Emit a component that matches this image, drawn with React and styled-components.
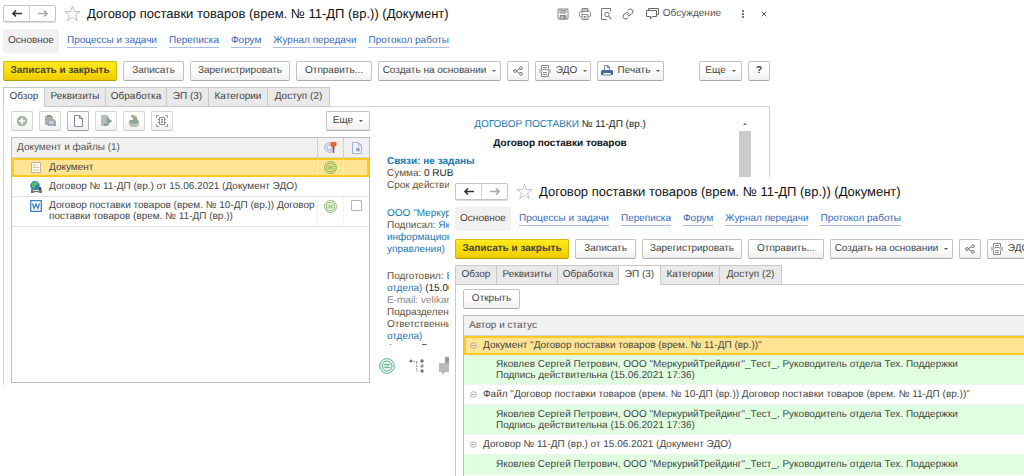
import React from "react";
import styled, { createGlobalStyle, css } from "styled-components";

const Global = createGlobalStyle`
  *, *::before, *::after { box-sizing: border-box; }
  body {
    margin: 0;
    background: #fff;
    color: #444;
    font: 10px/12px "Liberation Sans", Arial, sans-serif;
    text-rendering: geometricPrecision;
  }
  button, input { font: inherit; color: inherit; margin: 0; text-rendering: inherit; }
`;

/* ---------- desktop and windows ---------- */

const Desktop = styled.main`
  position: relative;
  min-height: 100vh;
  overflow: hidden;
`;

const Win = styled.section`
  overflow: hidden;
  background: #fff;
`;

const BackWindow = styled(Win)`
  width: 75.2%;
  padding: 5px 0 0 3px;
`;

const FrontWindow = styled(Win)`
  position: absolute;
  left: 449px;
  right: 0;
  top: 177px;
  bottom: 0;
  display: flex;
  flex-direction: column;
  padding: 6px 0 0 6px;
`;

const TitleBar = styled.header`
  display: flex;
  align-items: center;
  height: 17px;
`;

const NavPair = styled.div`
  display: flex;
  flex: none;
  width: 53px;
  height: 17px;
  border: 1px solid #c4c4c4;
  border-radius: 2px;
  box-shadow: 0 1px 0 #ddd;
`;

const NavButton = styled.button`
  flex: 1;
  display: flex;
  align-items: center;
  justify-content: center;
  padding: 0;
  border: 0;
  background: none;
  color: ${(p) => (p.disabled ? "#a8a8a8" : "#333")};
  & + & { border-left: 1px solid #d4d4d4; }
`;

const StarButton = styled.button`
  flex: none;
  display: flex;
  padding: 0;
  margin: 0 6px 0 8px;
  border: 0;
  background: none;
`;

const Title = styled.h1`
  margin: 0;
  flex: none;
  font-size: 13px;
  line-height: 17px;
  font-weight: 400;
  color: #111;
  white-space: nowrap;
`;

const HeaderTools = styled.div`
  display: flex;
  align-items: center;
  gap: 8px;
  margin-left: auto;
  padding-right: 3px;
  color: #555;
`;

const ToolLink = styled.button`
  display: flex;
  align-items: center;
  gap: 4px;
  padding: 0;
  border: 0;
  background: none;
  margin-left: ${(p) => p.$lead || 0}px;
`;

const Sections = styled.nav`
  display: flex;
  align-items: center;
  gap: 12px;
  height: 24px;
  margin-top: 7px;
  white-space: nowrap;
`;

const CurrentSection = styled.span`
  height: 24px;
  width: 56px;
  margin-right: -4px;
  line-height: 24px;
  text-align: center;
  background: #f1f1f1;
  border-radius: 2px;
`;

const SectionLink = styled.a`
  color: #3a6bb8;
  line-height: 12px;
  text-decoration: none;
  border-bottom: 1px solid #a9c0e2;
`;

const Commands = styled.div`
  display: flex;
  gap: 6px;
  margin-top: 8px;
  white-space: nowrap;
`;

const Spacer = styled.span`
  flex: 1;
`;

const Button = styled.button`
  flex: none;
  display: flex;
  align-items: center;
  justify-content: center;
  gap: 5px;
  width: ${(p) => p.$w}px;
  height: 20px;
  padding: 0;
  border: 1px solid #c2c2c2;
  border-bottom-color: #ababab;
  border-radius: 2px;
  background: linear-gradient(#fff 40%, #f0f0f0);
  white-space: nowrap;
  ${(p) =>
    p.$primary &&
    css`
      border-color: #d3b90b;
      border-bottom-color: #b59c00;
      background: linear-gradient(#ffe921, #f8da00 60%, #ecca00);
      font-weight: 700;
    `}
  ${(p) =>
    p.$strong &&
    css`
      border-color: #b4b4b4;
      border-bottom-color: #999;
    `}
  ${(p) =>
    p.$faint &&
    css`
      border-color: #d6d6d6;
      border-bottom-color: #c8c8c8;
    `}
`;

const Caret = styled.span`
  width: 0;
  height: 0;
  margin-left: 1px;
  border: 2px solid transparent;
  border-top-color: #555;
  border-bottom: 0;
`;

const Tabs = styled.div`
  display: flex;
  margin-top: 6px;
  position: relative;
  z-index: 1;
`;

const Tab = styled.button`
  flex: none;
  width: ${(p) => p.$w}px;
  height: 20px;
  padding: 0;
  border: 1px solid #c9c9c9;
  border-left-width: ${(p) => (p.$first ? 1 : 0)}px;
  border-bottom-color: ${(p) => (p.$active ? "#fff" : "#c9c9c9")};
  background: ${(p) => (p.$active ? "#fff" : "#e9e9e9")};
  white-space: nowrap;
`;

/* ---------- overview page ---------- */

const OverviewPanel = styled.div`
  display: grid;
  grid-template-columns: minmax(0, 359fr) minmax(0, 373fr);
  column-gap: 8px;
  margin-top: -1px;
  padding: 4px 18px 2px 7px;
  border: 1px solid #d4d4d4;
  border-bottom: 0;
`;

const ListTools = styled.div`
  display: flex;
  gap: 6px;
`;

const ListFrame = styled.div`
  height: 246px;
  margin-top: 6px;
  border: 1px solid #bdbdbd;
`;

const Grid = styled.table`
  width: 100%;
  table-layout: fixed;
  border-collapse: separate;
  border-spacing: 0;
`;

const Col = styled.col`
  width: ${(p) => p.$w}px;
`;

const HeadCell = styled.th`
  height: 20px;
  padding: 0 0 0 5px;
  background: #f1f1f1;
  border-bottom: 1px solid #d6d6d6;
  font-weight: 400;
  text-align: left;
  color: #555;
  & + & { padding: 0; text-align: center; border-left: 1px solid #d0d0d0; }
  svg { display: block; margin: 0 auto; }
`;

const FileRow = styled.tr`
  height: ${(p) => p.$h}px;
`;

const FileCell = styled.td`
  padding: 0;
  border-bottom: 1px solid #e4e4e4;
  vertical-align: ${(p) => (p.$top ? "top" : "middle")};
  svg, input { display: block; margin: 0 auto; }
  ${(p) => p.$top && "padding-top: 3px;"}
  ${(p) =>
    p.$selected &&
    css`
      background: #ffe593;
      border-top: 2px solid #ffc91f;
      border-bottom: 2px solid #ffc91f;
      &:first-child { border-left: 2px solid #ffc91f; }
      &:last-child { border-right: 2px solid #ffc91f; }
      & + & { border-left: 1px solid #fff3cb; }
    `}
`;

const FileName = styled.div`
  display: grid;
  grid-template-columns: 12px 1fr;
  column-gap: 7px;
  align-items: ${(p) => (p.$top ? "start" : "center")};
  padding-left: ${(p) => (p.$selected ? 16 : 18)}px;
  line-height: 11px;
`;

const Tick = styled.input`
  appearance: none;
  width: 11px;
  height: 11px;
  border: 1px solid #b0b0b0;
  border-radius: 1px;
  background: #fff;
`;

const Preview = styled.article`
  position: relative;
  padding: 8px 0 0 9px;
  white-space: nowrap;
`;

const PreviewHead = styled.div`
  display: grid;
  grid-template-columns: 1fr 12px;
`;

const PreviewTitles = styled.div`
  padding-right: 6px;
  text-align: center;
  color: #222;
`;

const DocLine = styled.p`
  margin: 0 0 7px;
  line-height: 12px;
`;

const DocName = styled.h2`
  margin: 0;
  font-size: 10px;
  line-height: 12px;
  color: #111;
`;

const Scrollbar = styled.div`
  display: flex;
  flex-direction: column;
  align-items: center;
  height: 37px;
  overflow: visible;
`;

const ScrollArrow = styled.i`
  flex: none;
  margin: 4px 0 6px;
  border: 2px solid transparent;
  border-bottom-color: #777;
  border-top: 0;
`;

const Thumb = styled.i`
  flex: none;
  width: 12px;
  height: 180px;
  background: #cbcbcb;
`;

const Details = styled.div`
  height: 189px;
  overflow: hidden;
  color: #222;
`;

const Para = styled.p`
  margin: 0 0 ${(p) => p.$after}px;
  line-height: 12px;
`;

const Label = styled.span`
  color: #5f5136;
`;

const DocLink = styled.a`
  color: #1978ab;
  text-decoration: none;
  font-weight: ${(p) => (p.$bold ? 700 : 400)};
`;

const Muted = styled.span`
  color: #888;
`;

const PreviewFoot = styled.div`
  display: flex;
  align-items: center;
  gap: 14px;
  margin: 12px 0 0 -8px;
`;

/* ---------- signatures page ---------- */

const SignPanel = styled.div`
  flex: 1;
  display: flex;
  flex-direction: column;
  align-items: flex-start;
  margin-top: -1px;
  padding: 4px 0 0 7px;
  border: 1px solid #c9c9c9;
  border-width: 1px 0 0 1px;
`;

const SignFrame = styled.div`
  flex: 1;
  align-self: stretch;
  margin-top: 6px;
  border: 1px solid #bdbdbd;
  border-width: 1px 0 0 1px;
`;

const TreeCell = styled.td`
  height: ${(p) => p.$h}px;
  padding: 0 0 0 6px;
  border-bottom: 1px solid #f0f0f0;
  ${(p) =>
    p.$selected &&
    css`
      padding-left: 4px;
      background: #ffe593;
      border: 2px solid #ffc91f;
      border-right: 0;
    `}
`;

const TreeLabel = styled.div`
  display: flex;
  align-items: center;
  gap: 6px;
  white-space: nowrap;
`;

const SignCell = styled.td`
  height: ${(p) => p.$h}px;
  padding: 4px 0 0 32px;
  border-bottom: 1px solid #edf5ed;
  background: #e0ffe0;
  line-height: 11px;
  vertical-align: top;
  white-space: nowrap;
`;

const SignLine = styled.div``;

/* ---------- icons ---------- */

const Svg = ({ w = 12, h = w, vb, children, ...rest }) => (
  <svg
    width={w}
    height={h}
    viewBox={vb || `0 0 ${w} ${h}`}
    fill="none"
    stroke="currentColor"
    aria-hidden="true"
    {...rest}
  >
    {children}
  </svg>
);

const ArrowIcon = ({ right }) => (
  <Svg w={12} h={9}>
    <path
      d={right ? "M1 4.5h9M7 1.5l3 3-3 3" : "M11 4.5H2M5 1.5l-3 3 3 3"}
      strokeWidth="1.7"
    />
  </Svg>
);

const StarIcon = () => (
  <Svg w={17} h={17} stroke="#bcc2c8">
    <path d="M8.500 1l1.800 5.500h5.900l-4.700 3.500 1.800 5.700-4.800-3.500-4.800 3.500 1.800-5.700L.8 6.500h5.900z" />
  </Svg>
);

const SaveIcon = () => (
  <Svg w={12} stroke="#888">
    <path d="M1 1h10v10H1zM3 1v4h6V1M4 2.500h4M4 4h4" />
    <path d="M3 7.500h6V11H3z" fill="#999" />
    <path d="M5 8.500v2" stroke="#fff" />
  </Svg>
);

const PrinterIcon = () => (
  <Svg w={12} stroke="#888">
    <path d="M3 3.500V.5h6v3M3 9H1.500L.5 8V4.500l1-1h9l1 1V8l-1 1H9" />
    <path d="M3 6.500h6v5H3zM4.500 8.500h3M4.500 10h3M2 5h1.500M3 2h6" />
  </Svg>
);

const FindPageIcon = () => (
  <Svg w={12} stroke="#777">
    <path d="M4 11.500H1.500V.5h9v3M7 11.500H4" />
    <circle cx="7" cy="6.500" r="2.200" />
    <path d="M8.700 8.500l2.600 2.600" strokeWidth="1.300" />
  </Svg>
);

const ChainIcon = () => (
  <Svg w={12} vb="0 0 24 24" stroke="#666" strokeWidth="2" strokeLinecap="round">
    <path d="M10 13a5 5 0 0 0 7.540.540l3-3a5 5 0 0 0-7.070-7.070l-1.720 1.710" />
    <path d="M14 11a5 5 0 0 0-7.540-.540l-3 3a5 5 0 0 0 7.070 7.070l1.710-1.710" />
  </Svg>
);

const TalkIcon = () => (
  <Svg w={13} h={12} stroke="#666">
    <path d="M2.500 2.500v-2h10v6h-2M.5 2.500h10v6H6.500l-2 2.500v-2.500h-4z" />
  </Svg>
);

const DotsIcon = () => (
  <Svg w={4} h={10} stroke="none" fill="#777">
    <path d="M1 1h2v2H1zM1 4h2v2H1zM1 7h2v2H1z" />
  </Svg>
);

const CloseIcon = () => (
  <Svg w={6} stroke="#555">
    <path d="M.7.7l4.600 4.600M5.300.7L.7 5.300" />
  </Svg>
);

const ShareIcon = () => (
  <Svg w={10} stroke="#777">
    <path d="M3 5l4-2.500M3 5l4 2.500" />
    <circle cx="2" cy="5" r="1.400" fill="#fff" />
    <circle cx="8" cy="2.200" r="1.400" fill="#fff" />
    <circle cx="8" cy="7.800" r="1.400" fill="#fff" />
  </Svg>
);

const EdoIcon = () => (
  <Svg w={12} stroke="#888">
    <path d="M2.500 4V.5h7V4M2.500 8v3.500h7V8M4 2.500h4M4 9.500h4M0 5h4M0 7h3M8 5h4M9 7h3M4 4.500h4M4 7.500h4" />
  </Svg>
);

const BluePrinterIcon = () => (
  <Svg w={12} stroke="none">
    <path d="M3 0h4l2 2v3H3z" fill="#6f8fb0" />
    <path d="M4 1h2v2h2v2H4z" fill="#fff" />
    <path d="M1 5h10l1 1v4H0V6z" fill="#426b98" />
    <path d="M2 8h8v3H2z" fill="#a9bdd2" />
    <path d="M3 8h6v1H3z" fill="#fff" />
  </Svg>
);

const AddIcon = () => (
  <Svg w={12} stroke="none">
    <circle cx="6" cy="6" r="5.300" fill="#a3b9a6" />
    <path d="M5 3h2v2h2v2H7v2H5V7H3V5h2z" fill="#eef3ee" />
  </Svg>
);

const PasteIcon = () => (
  <Svg w={13} h={12} stroke="none">
    <path d="M1 1h8v9H1z" fill="#b9aaa0" />
    <path d="M3 0h4v2H3z" fill="#948c88" />
    <path d="M4 4h6l2 2v5H4z" fill="#9faab4" />
    <path d="M5 6h5v3H5z" fill="#c5ced6" />
  </Svg>
);

const NewPageIcon = () => (
  <Svg w={9} h={12} stroke="#7c8b9c">
    <path d="M.5.5h5l3 3v8h-8zM5.500.5v3h3" fill="#fff" />
  </Svg>
);

const EditIcon = () => (
  <Svg w={13} h={12} stroke="none">
    <path d="M1 0h6l2 2v9H1z" fill="#b6bec5" />
    <path d="M6 2l6.500 4L7 10z" fill="#8ba48e" />
    <path d="M4 11l1-3 2 2z" fill="#78877a" />
  </Svg>
);

const StampIcon = () => (
  <Svg w={12} stroke="none">
    <path d="M3 0h3l3 2v2l1 1H5V3L3 2z" fill="#b9ab8b" />
    <path d="M1 6h10v4l-2 2H3l-2-2z" fill="#b9bfb4" />
    <ellipse cx="6" cy="6.500" rx="4.800" ry="2" fill="#8fa396" />
    <path d="M6 2h3v3H6z" fill="#93a796" />
  </Svg>
);

const ScanIcon = () => (
  <Svg w={12} stroke="#999">
    <path d="M.5 3V.5H3M9 .5h2.500V3M.5 9v2.500H3M9 11.500h2.500V9" />
    <path d="M3.500 2.500h5v7h-5zM5 4.500h2M5 6h2M5 7.500h2M2 4.500h1M2 7.500h1M9 4.500h1M9 7.500h1" stroke="#888" />
  </Svg>
);

const SignKeyIcon = () => (
  <Svg w={13}>
    <circle cx="5.500" cy="6.500" r="4.800" stroke="#a3a3cf" />
    <circle cx="5.500" cy="6.500" r="2.700" stroke="#a3a3cf" />
    <path d="M7 1.500h5v3l-1.500 1h-2L7 4.500z" fill="#f0632a" stroke="#e0602d" />
    <path d="M9.500 6v6" stroke="#8d5a40" strokeWidth="1.500" />
  </Svg>
);

const PageBadgeIcon = () => (
  <Svg w={10} h={12} stroke="#a5b1d0">
    <path d="M.5.5h6l3 3v8h-9z" fill="#eef2fa" />
    <path d="M6.500.5v3h3" />
    <circle cx="6" cy="7.500" r="1.700" fill="#9aa4d6" />
  </Svg>
);

const SealIcon = ({ size = 13, color = "#67a94b" }) => (
  <Svg w={size} vb="0 0 16 16" stroke={color}>
    <circle cx="8" cy="8" r="7.300" />
    <circle cx="8" cy="8" r="5" />
    <path d="M4.500 6.300h7M4.500 9.700h7" />
    <path d="M5.500 8h5" strokeWidth=".8" />
  </Svg>
);

const DocIcon = () => (
  <Svg w={10} h={11} stroke="#bdb791">
    <path d="M.5.5h9v10h-9z" fill="#fffdf2" />
    <path d="M2 3h4M2 5.500h6M2 8h6" stroke="#c9c5a8" />
  </Svg>
);

const GlobeIcon = () => (
  <Svg w={12} stroke="none">
    <circle cx="5" cy="4.800" r="4.700" fill="#1d86cf" />
    <path d="M4 1l3 0 1 2-3 2-1 3-2-2 0-3z" fill="#5fbf53" />
    <path d="M1 8h8l3 1v3H1z" fill="#777" />
    <path d="M3 9h6v1H3zM4 11h5v1H4z" fill="#ddd" />
    <circle cx="10" cy="7.500" r="1.500" fill="#444" />
  </Svg>
);

const WordIcon = () => (
  <Svg w={12} stroke="#3f83c4">
    <path d="M.7.7h10.600v10.600H.7z" fill="#fff" strokeWidth="1.300" />
    <path d="M2.500 3.500l1.600 5L6 4l1.900 4.500 1.600-5" strokeWidth="1.300" />
  </Svg>
);

const TreeIcon = () => (
  <Svg w={16} stroke="none" fill="#777">
    <circle cx="2" cy="3" r="1.500" />
    <path d="M4 3.500h5M7.500 4v9M7 8.500h3M7 13h3" stroke="#aaa" strokeDasharray="2 1" />
    <circle cx="13" cy="3" r="1.800" />
    <circle cx="13" cy="8" r="1.700" fill="#999" />
    <circle cx="13" cy="13" r="1.700" />
  </Svg>
);

const ChatIcon = () => (
  <Svg w={20} h={18} stroke="none">
    <path d="M6 0h14v11H6z" fill="#999" />
    <path d="M0 6h13v9H6l-3 3v-3H0z" fill="#b9b9b9" />
  </Svg>
);

const CollapseIcon = () => (
  <Svg w={7} stroke="#aaa">
    <circle cx="3.500" cy="3.500" r="2.800" />
    <path d="M2 3.500h3" />
  </Svg>
);

/* ---------- shared window parts ---------- */

const TITLE = "Договор поставки товаров (врем. № 11-ДП (вр.)) (Документ)";
const SECTIONS = ["Процессы и задачи", "Переписка", "Форум", "Журнал передачи", "Протокол работы"];
const TABS = [
  ["Обзор", 42],
  ["Реквизиты", 61],
  ["Обработка", 61],
  ["ЭП (3)", 42],
  ["Категории", 59],
  ["Доступ (2)", 62],
];

const WindowTop = ({ active, tools }) => (
  <>
    <TitleBar>
      <NavPair>
        <NavButton aria-label="Назад"><ArrowIcon /></NavButton>
        <NavButton aria-label="Вперед" disabled><ArrowIcon right /></NavButton>
      </NavPair>
      <StarButton aria-label="В избранное"><StarIcon /></StarButton>
      <Title>{TITLE}</Title>
      {tools && (
        <HeaderTools>
          <ToolLink aria-label="Сохранить"><SaveIcon /></ToolLink>
          <ToolLink aria-label="Печать" $lead={2}><PrinterIcon /></ToolLink>
          <ToolLink aria-label="Просмотр" $lead={1}><FindPageIcon /></ToolLink>
          <ToolLink aria-label="Ссылка" $lead={2}><ChainIcon /></ToolLink>
          <ToolLink $lead={4}><TalkIcon />Обсуждение</ToolLink>
          <ToolLink aria-label="Меню" $lead={12}><DotsIcon /></ToolLink>
          <ToolLink aria-label="Закрыть" $lead={8}><CloseIcon /></ToolLink>
        </HeaderTools>
      )}
    </TitleBar>
    <Sections>
      <CurrentSection>Основное</CurrentSection>
      {SECTIONS.map((s) => (
        <SectionLink href="#" key={s}>{s}</SectionLink>
      ))}
    </Sections>
    <Commands>
      <Button $w={114} $primary>Записать и закрыть</Button>
      <Button $w={61}>Записать</Button>
      <Button $w={100}>Зарегистрировать</Button>
      <Button $w={76}>Отправить...</Button>
      <Button $w={123}>Создать на основании<Caret /></Button>
      <Button $w={22} aria-label="Поделиться"><ShareIcon /></Button>
      <Button $w={56}><EdoIcon />ЭДО<Caret /></Button>
      <Button $w={67}><BluePrinterIcon />Печать<Caret /></Button>
      {tools && (
        <>
          <Spacer />
          <Button $w={43}>Еще<Caret /></Button>
          <Button $w={22} aria-label="Справка"><b>?</b></Button>
        </>
      )}
    </Commands>
    <Tabs role="tablist">
      {TABS.map(([name, w], i) => (
        <Tab key={name} role="tab" aria-selected={i === active} $w={w} $first={i === 0} $active={i === active}>
          {name}
        </Tab>
      ))}
    </Tabs>
  </>
);

const LIST_TOOLS = [
  ["Добавить", AddIcon],
  ["Вставить", PasteIcon],
  ["Создать", NewPageIcon],
  ["Изменить", EditIcon],
  ["Штамп", StampIcon],
  ["Сканировать", ScanIcon],
];

const SIGNER = 'Яковлев Сергей Петрович, ООО "МеркурийТрейдинг"_Тест_, Руководитель отдела Тех. Поддержки';
const SIGNED = "Подпись действительна (15.06.2021 17:36)";
const SIGNATURES = [
  { name: 'Документ "Договор поставки товаров (врем. № 11-ДП (вр.))"', lines: [SIGNER, SIGNED], selected: true },
  { name: 'Файл "Договор поставки товаров (врем. № 10-ДП (вр.)) Договор поставки товаров (врем. № 11-ДП (вр.))"', lines: [SIGNER, SIGNED] },
  { name: "Договор № 11-ДП (вр.) от 15.06.2021 (Документ ЭДО)", lines: [SIGNER] },
];

export default function App() {
  return (
    <Desktop>
      <Global />
      <BackWindow>
        <WindowTop active={0} tools />
        <OverviewPanel>
          <div>
            <ListTools>
              {LIST_TOOLS.map(([name, Icon]) => (
                <Button key={name} $w={22} $faint={name !== "Создать"} $strong={name === "Создать"} aria-label={name}>
                  <Icon />
                </Button>
              ))}
              <Spacer />
              <Button $w={44}>Еще<Caret /></Button>
            </ListTools>
            <ListFrame>
              <Grid>
                <colgroup>
                  <col />
                  <Col $w={26} />
                  <Col $w={26} />
                </colgroup>
                <thead>
                  <tr>
                    <HeadCell>Документ и файлы (1)</HeadCell>
                    <HeadCell aria-label="Подпись"><SignKeyIcon /></HeadCell>
                    <HeadCell aria-label="Файл"><PageBadgeIcon /></HeadCell>
                  </tr>
                </thead>
                <tbody>
                  <FileRow $h={19}>
                    <FileCell $selected><FileName $selected><DocIcon />Документ</FileName></FileCell>
                    <FileCell $selected><SealIcon /></FileCell>
                    <FileCell $selected />
                  </FileRow>
                  <FileRow $h={20}>
                    <FileCell colSpan={3}>
                      <FileName><GlobeIcon />Договор № 11-ДП (вр.) от 15.06.2021 (Документ ЭДО)</FileName>
                    </FileCell>
                  </FileRow>
                  <FileRow $h={30}>
                    <FileCell $top>
                      <FileName $top>
                        <WordIcon />
                        <span>
                          Договор поставки товаров (врем. № 10-ДП (вр.)) Договор
                          <br />
                          поставки товаров (врем. № 11-ДП (вр.))
                        </span>
                      </FileName>
                    </FileCell>
                    <FileCell $top><SealIcon /></FileCell>
                    <FileCell $top><Tick type="checkbox" aria-label="Отметить файл" /></FileCell>
                  </FileRow>
                </tbody>
              </Grid>
            </ListFrame>
          </div>
          <Preview>
            <PreviewHead>
              <PreviewTitles>
                <DocLine><DocLink href="#">ДОГОВОР ПОСТАВКИ</DocLink> № 11-ДП (вр.)</DocLine>
                <DocName>Договор поставки товаров</DocName>
              </PreviewTitles>
              <Scrollbar><ScrollArrow /><Thumb /></Scrollbar>
            </PreviewHead>
            <Details>
              <Para $after={16}>
                <DocLink href="#" $bold>Связи: не заданы</DocLink><br />
                <Label>Сумма:</Label> 0 RUB<br />
                <Label>Срок действия</Label>
              </Para>
              <Para $after={15}>
                <DocLink href="#">ООО "Меркурий"</DocLink><br />
                <Label>Подписал:</Label> <DocLink href="#">Яков</DocLink><br />
                <DocLink href="#">информационного</DocLink><br />
                <DocLink href="#">управления)</DocLink>
              </Para>
              <Para $after={0}>
                <Label>Подготовил:</Label> <DocLink href="#">В.</DocLink><br />
                <DocLink href="#">отдела)</DocLink> (15.06<br />
                <Muted>E-mail: velikano</Muted><br />
                <Label>Подразделение</Label><br />
                <Label>Ответственный</Label><br />
                <DocLink href="#">отдела)</DocLink><br />
                <Label>Адрес: Г</Label>
              </Para>
            </Details>
            <PreviewFoot>
              <SealIcon size={16} color="#4fb587" />
              <TreeIcon />
              <ChatIcon />
            </PreviewFoot>
          </Preview>
        </OverviewPanel>
      </BackWindow>

      <FrontWindow>
        <WindowTop active={3} />
        <SignPanel>
          <Button $w={57}>Открыть</Button>
          <SignFrame>
            <Grid>
              <thead>
                <tr><HeadCell>Автор и статус</HeadCell></tr>
              </thead>
              <tbody>
                {SIGNATURES.map((s) => (
                  <React.Fragment key={s.name}>
                    <tr>
                      <TreeCell $h={s.selected ? 19 : 20} $selected={s.selected}>
                        <TreeLabel><CollapseIcon />{s.name}</TreeLabel>
                      </TreeCell>
                    </tr>
                    <tr>
                      <SignCell $h={s.lines.length > 1 ? 30 : 20}>
                        {s.lines.map((l) => <SignLine key={l}>{l}</SignLine>)}
                      </SignCell>
                    </tr>
                  </React.Fragment>
                ))}
              </tbody>
            </Grid>
          </SignFrame>
        </SignPanel>
      </FrontWindow>
    </Desktop>
  );
}
